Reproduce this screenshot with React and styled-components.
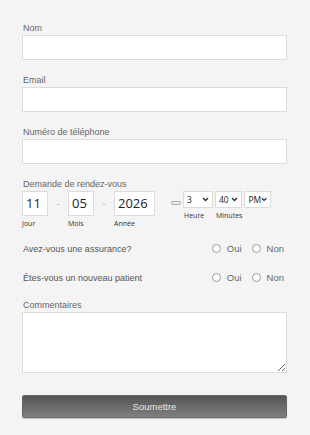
import React from "react";
import styled, { createGlobalStyle } from "styled-components";

const GlobalStyle = createGlobalStyle`
  html, body {
    margin: 0;
    padding: 0;
    background: #f4f4f4;
  }
  * {
    box-sizing: border-box;
  }
`;

const App = () => {
  return (
    <Page>
      <GlobalStyle />
      <Field>
        <Label>Nom</Label>
        <TextInput />
      </Field>
      <Field>
        <Label>Email</Label>
        <TextInput />
      </Field>
      <Field>
        <Label>Numéro de téléphone</Label>
        <TextInput />
      </Field>

      <Label>Demande de rendez-vous</Label>
      <DateRow>
        <DatePart>
          <DateBox $w={26}>11</DateBox>
          <SubLabel>Jour</SubLabel>
        </DatePart>
        <Dash>-</Dash>
        <DatePart>
          <DateBox $w={26}>05</DateBox>
          <SubLabel>Mois</SubLabel>
        </DatePart>
        <Dash>-</Dash>
        <DatePart>
          <DateBox $w={41}>2026</DateBox>
          <SubLabel>Année</SubLabel>
        </DatePart>
        <Pill />
        <TimeGroup>
          <DatePart>
            <SelectBox $w={30}>
              3
              <Chevron />
            </SelectBox>
            <SubLabel $pad>Heure</SubLabel>
          </DatePart>
          <DatePart>
            <SelectBox $w={27}>
              40
              <Chevron />
            </SelectBox>
            <SubLabel $pad>Minutes</SubLabel>
          </DatePart>
          <DatePart>
            <SelectBox $w={27}>
              PM
              <Chevron />
            </SelectBox>
          </DatePart>
        </TimeGroup>
      </DateRow>

      <QuestionRow $top={13}>
        <Question>Avez-vous une assurance?</Question>
        <Choices>
          <Choice><Radio />Oui</Choice>
          <Choice><Radio />Non</Choice>
        </Choices>
      </QuestionRow>
      <QuestionRow $top={14}>
        <Question>Êtes-vous un nouveau patient</Question>
        <Choices>
          <Choice><Radio />Oui</Choice>
          <Choice><Radio />Non</Choice>
        </Choices>
      </QuestionRow>

      <CommentField>
        <Label>Commentaires</Label>
        <TextArea />
      </CommentField>

      <SubmitButton>Soumettre</SubmitButton>
    </Page>
  );
};

const Chevron = () => (
  <svg width="7" height="5" viewBox="0 0 7 5">
    <path d="M1 1 L3.5 3.5 L6 1" fill="none" stroke="#333" strokeWidth="1.5" />
  </svg>
);

const Page = styled.div`
  width: 310px;
  min-height: 435px;
  padding: 22px 23px 0 22px;
  font-family: "Liberation Sans", Arial, sans-serif;
`;

const Field = styled.div`
  display: flex;
  flex-direction: column;
  margin-bottom: 14px;
`;

const Label = styled.div`
  font-size: 9px;
  line-height: 13px;
  color: #666;
  padding-left: 1px;
`;

const TextInput = styled.div`
  height: 25px;
  background: #fff;
  border: 1px solid #dcdcdc;
`;

const DateRow = styled.div`
  display: flex;
  align-items: flex-start;
`;

const DatePart = styled.div`
  display: flex;
  flex-direction: column;
`;

const DateBox = styled.div`
  width: ${(p) => p.$w}px;
  height: 25px;
  background: #fff;
  border: 1px solid #dcdcdc;
  font-family: "Open Sans", sans-serif;
  font-size: 13px;
  line-height: 23px;
  color: #222;
  padding-left: 3px;
`;

const SubLabel = styled.div`
  font-family: "Open Sans", sans-serif;
  font-size: 7px;
  line-height: 9px;
  margin-top: 3px;
  color: #333;
  padding-left: ${(p) => (p.$pad ? "1px" : "0")};
`;

const Dash = styled.div`
  width: 20px;
  text-align: center;
  font-size: 8px;
  line-height: 25px;
  color: #888;
`;

const Pill = styled.div`
  width: 10px;
  height: 4px;
  border: 1px solid #aaa;
  border-radius: 3px;
  background: #eee;
  margin: 10px 2px 0 16px;
`;

const TimeGroup = styled.div`
  display: flex;
  gap: 2px;
`;

const SelectBox = styled.div`
  width: ${(p) => p.$w}px;
  height: 17px;
  background: #fff;
  border: 1px solid #dcdcdc;
  display: flex;
  align-items: center;
  justify-content: space-between;
  padding: 0 3px;
  font-family: "Open Sans", sans-serif;
  font-size: 8.5px;
  color: #222;
`;

const QuestionRow = styled.div`
  display: flex;
  align-items: center;
  justify-content: space-between;
  height: 15px;
  margin-top: ${(p) => p.$top}px;
`;

const Question = styled.div`
  font-size: 9px;
  color: #555;
  padding-left: 1px;
`;

const Choices = styled.div`
  display: flex;
  gap: 10px;
  padding-right: 3px;
`;

const Choice = styled.div`
  display: flex;
  align-items: center;
  font-size: 9.5px;
  color: #666;
`;

const Radio = styled.span`
  width: 9px;
  height: 9px;
  border: 1px solid #999;
  border-radius: 50%;
  background: #fff;
  margin-right: 6px;
`;

const CommentField = styled.div`
  display: flex;
  flex-direction: column;
  margin-top: 14px;
`;

const TextArea = styled.textarea`
  height: 61px;
  background: #fff;
  border: 1px solid #dcdcdc;
  resize: vertical;
  outline: none;
`;

const SubmitButton = styled.button`
  display: block;
  width: 100%;
  height: 23px;
  margin-top: 22px;
  border: 1px solid #666;
  border-radius: 2px;
  background: linear-gradient(to bottom, #555 0%, #6a6a6a 50%, #808080 100%);
  color: #e6e6e6;
  font-family: "Liberation Sans", Arial, sans-serif;
  font-size: 9.5px;
  box-shadow: 0 1px 1px rgba(0, 0, 0, 0.2);
`;

export default App;
